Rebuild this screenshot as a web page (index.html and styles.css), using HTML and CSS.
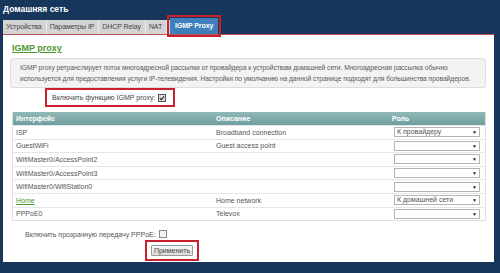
FILE: index.html
```html
<!DOCTYPE html>
<html lang="ru">
<head>
<meta charset="utf-8">
<title>IGMP proxy</title>
<link rel="stylesheet" href="styles.css">
</head>
<body>
<div class="title">Домашняя сеть</div>
<div class="tabs">
  <div class="tab">Устройства</div>
  <div class="tab">Параметры IP</div>
  <div class="tab">DHCP Relay</div>
  <div class="tab">NAT</div>
  <div class="tab-gap"></div>
  <div class="tab active">IGMP Proxy</div>
</div>
<div class="panel">
  <div class="heading">IGMP proxy</div>
  <div class="info">IGMP proxy ретранслирует поток многоадресной рассылки от провайдера к устройствам домашней сети. Многоадресная рассылка обычно используется для предоставления услуги IP-телевидения. Настройки по умолчанию на данной странице подходят для большинства провайдеров.</div>
  <div class="enable-row">
    <div class="mark enable">
      <span>Включить функцию IGMP proxy:</span>
      <span class="check checked"><svg viewBox="0 0 8 8" width="6" height="6"><path d="M1.2 4.2 L3.2 6.2 L6.8 1.6" fill="none" stroke="#222" stroke-width="1.4"/></svg></span>
    </div>
  </div>
  <table class="grid">
    <thead>
      <tr><th class="c1">Интерфейс</th><th class="c2">Описание</th><th class="c3">Роль</th></tr>
    </thead>
    <tbody>
      <tr><td>ISP</td><td>Broadband connection</td><td><div class="select"><span>К провайдеру</span><i>▼</i></div></td></tr>
      <tr><td>GuestWiFi</td><td>Guest access point</td><td><div class="select"><span></span><i>▼</i></div></td></tr>
      <tr><td>WifiMaster0/AccessPoint2</td><td></td><td><div class="select"><span></span><i>▼</i></div></td></tr>
      <tr><td>WifiMaster0/AccessPoint3</td><td></td><td><div class="select"><span></span><i>▼</i></div></td></tr>
      <tr><td>WifiMaster0/WifiStation0</td><td></td><td><div class="select"><span></span><i>▼</i></div></td></tr>
      <tr><td><a class="link" href="#">Home</a></td><td>Home network</td><td><div class="select"><span>К домашней сети</span><i>▼</i></div></td></tr>
      <tr><td>PPPoE0</td><td>Televox</td><td><div class="select"><span></span><i>▼</i></div></td></tr>
    </tbody>
  </table>
  <div class="pppoe-row">
    <span>Включить прозрачную передачу PPPoE:</span>
    <span class="check"></span>
  </div>
  <div class="apply-row">
    <div class="mark apply"><button class="btn" type="button">Применить</button></div>
  </div>
</div>
</body>
</html>
```

FILE: styles.css
```css
html, body {
  margin: 0;
  padding: 0;
}
body {
  width: 500px;
  height: 273px;
  overflow: hidden;
  background: #17365c;
  font-family: "Liberation Sans", Arial, sans-serif;
  font-size: 7px;
  color: #555;
}
.title {
  height: 18px;
  box-sizing: border-box;
  padding: 2px 0 0 3px;
  line-height: 14px;
  font-size: 8.5px;
  font-weight: bold;
  color: #fff;
}
.tabs {
  display: flex;
  align-items: flex-end;
  height: 16px;
  margin-left: 3px;
}
.tab {
  height: 14px;
  line-height: 14px;
  padding: 0 4px 0 3px;
  background: #d4d4d4;
  color: #444;
  border-right: 1px solid #ececec;
  letter-spacing: -0.1px;
}
.tab-gap {
  width: 3px;
  height: 14px;
  background: #d4d4d4;
}
.tab.active {
  height: 16px;
  line-height: 16px;
  padding: 0 5px;
  background: #3f7fbb;
  color: #fff;
  font-weight: bold;
  border-right: none;
  outline: 2px solid #c8202c;
  outline-offset: 1px;
}
.panel {
  height: 228px;
  box-sizing: border-box;
  margin: 0 6px 0 3px;
  background: #fff;
  border-top: 1px solid #b9545c;
  display: flex;
  flex-direction: column;
}
.heading {
  margin: 8px 0 0 9px;
  line-height: 11px;
  font-size: 9px;
  font-weight: bold;
  color: #4c9630;
  text-decoration: underline;
}
.info {
  margin: 4px 8px 0 7px;
  height: 30px;
  box-sizing: border-box;
  padding: 3px 9px 0;
  line-height: 11px;
  font-size: 6.7px;
  letter-spacing: -0.05px;
  background: #f3f3f3;
  border: 1px solid #dcdcdc;
  border-radius: 3px;
  color: #5a5a5a;
}
.enable-row {
  display: flex;
  margin-left: 42px;
}
.mark {
  border: 2px solid #c8202c;
  display: flex;
  align-items: center;
}
.enable {
  height: 19px;
  box-sizing: border-box;
  padding: 0 7px 0 5px;
  gap: 3px;
  color: #444;
}
.check {
  display: inline-flex;
  align-items: center;
  justify-content: center;
  width: 6px;
  height: 6px;
  border: 1px solid #888;
  background: #f4f4f4;
}
.check.checked {
  background: #ddd;
  border-color: #555;
}
.grid {
  margin: 5px 8px 0 9px;
  width: 474px;
  border-collapse: collapse;
  table-layout: fixed;
  border-left: 1px solid #e0e0e0;
  border-right: 1px solid #e0e0e0;
  border-bottom: 1px solid #e0e0e0;
}
.grid th {
  height: 13px;
  padding: 0 3px;
  text-align: left;
  color: #fff;
  font-weight: bold;
  background: linear-gradient(to bottom, #92b8b8, #6f9e9f);
}
.grid .c1 { width: 194px; }
.grid .c2 { width: 170px; }
.grid td {
  height: 13.6px;
  padding: 0 3px;
  color: #555;
  border-top: 1px solid #e6e6e6;
  box-sizing: border-box;
  white-space: nowrap;
}
.grid td:last-child {
  padding-left: 5px;
}
.link {
  color: #4c9630;
  text-decoration: underline;
}
.select {
  display: flex;
  align-items: center;
  justify-content: space-between;
  width: 86px;
  height: 10px;
  box-sizing: border-box;
  padding: 0 2px;
  border: 1px solid #b4b4b4;
  background: #fff;
  color: #555;
  line-height: 8px;
}
.select i {
  font-style: normal;
  font-size: 5px;
  color: #222;
}
.pppoe-row {
  display: flex;
  align-items: center;
  gap: 3px;
  margin: 7px 0 0 22px;
  height: 12px;
  color: #555;
}
.apply-row {
  display: flex;
  margin-left: 142px;
}
.apply {
  height: 21px;
  box-sizing: border-box;
  padding: 0 4px;
}
.btn {
  height: 11px;
  width: 42px;
  padding: 0;
  font-family: "Liberation Sans", Arial, sans-serif;
  font-size: 7px;
  color: #444;
  border: 1px solid #9a9a9a;
  border-radius: 1px;
  background: linear-gradient(to bottom, #f8f8f8, #dcdcdc);
}
```
